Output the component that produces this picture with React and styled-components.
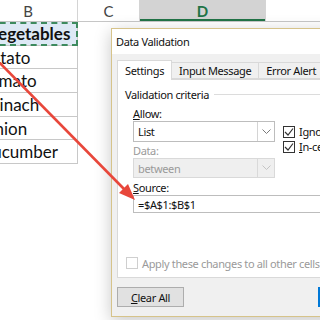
import { styled, createGlobalStyle } from "styled-components";

const GlobalStyle = createGlobalStyle`
    html, body {
        margin: 0;
        padding: 0;
        background: #fff;
        overflow: hidden;
    }
`;

const cellFont = `"Lato", "Liberation Sans", sans-serif`;
const uiFont = `"Noto Sans", "Liberation Sans", sans-serif`;

const vegetables = ["Potato", "Tomato", "Spinach", "Onion", "Cucumber"];

function Check({ checked, disabled }) {
    return (
        <Box $disabled={disabled}>
            {checked && (
                <svg width="10" height="10" viewBox="0 0 10 10">
                    <path d="M1 5 L4 8 L9 1.5" fill="none" stroke="#333" strokeWidth="1.2" />
                </svg>
            )}
        </Box>
    );
}

function Chevron({ disabled }) {
    return (
        <svg width="9" height="6" viewBox="0 0 9 6">
            <path d="M0.5 0.5 L4.5 4.5 L8.5 0.5" fill="none" stroke={disabled ? "#c4c4c4" : "#7a7a7a"} strokeWidth="1" />
        </svg>
    );
}

function App() {
    return (
        <Stage>
            <GlobalStyle />
            <Sheet>
                <HeaderRow>
                    <ColHead>B</ColHead>
                    <ColHead>C</ColHead>
                    <ColHead $active>D</ColHead>
                    <ColHead />
                </HeaderRow>
                <Row>
                    <Cell $title>Vegetables</Cell>
                </Row>
                {vegetables.map((v) => (
                    <Row key={v}>
                        <Cell>{v}</Cell>
                    </Row>
                ))}
            </Sheet>

            <Dialog>
                <TitleBar>Data Validation</TitleBar>
                <Body>
                    <Tabs>
                        <Tab $active>Settings</Tab>
                        <Tab>Input Message</Tab>
                        <Tab>Error Alert</Tab>
                    </Tabs>
                    <Panel>
                        <Legend>
                            <span>Validation criteria</span>
                        </Legend>
                        <Criteria>
                            <Label $top={5} $bottom={1}>
                                <u>A</u>llow:
                            </Label>
                            <FieldRow>
                                <Select>
                                    <span>List</span>
                                    <Arrow>
                                        <Chevron />
                                    </Arrow>
                                </Select>
                                <Options>
                                    <Option>
                                        <Check checked />
                                        Ignore blank
                                    </Option>
                                    <Option>
                                        <Check checked />
                                        <span>
                                            <u>I</u>n-cell dropdown
                                        </span>
                                    </Option>
                                </Options>
                            </FieldRow>
                            <Label $disabled $top={1} $bottom={1}>
                                Data:
                            </Label>
                            <Select $disabled>
                                <span>between</span>
                                <Arrow $disabled>
                                    <Chevron disabled />
                                </Arrow>
                            </Select>
                            <Label $top={2} $bottom={1}>
                                <u>S</u>ource:
                            </Label>
                            <Input>=$A$1:$B$1</Input>
                        </Criteria>
                        <ApplyRow>
                            <Check disabled />
                            Apply these changes to all other cells with the same settings
                        </ApplyRow>
                    </Panel>
                    <Footer>
                        <Button>
                            <u>C</u>lear All
                        </Button>
                        <Button $primary>OK</Button>
                    </Footer>
                </Body>
            </Dialog>

            <ArrowOverlay width="320" height="320" viewBox="0 0 320 320">
                <line x1="-4" y1="59" x2="126" y2="191" stroke="#e8473b" strokeWidth="2.6" />
                <polygon points="135,200 119,193 128,184" fill="#e8473b" />
            </ArrowOverlay>
        </Stage>
    );
}

const Stage = styled.div`
    position: relative;
    width: 320px;
    height: 320px;
    overflow: hidden;
    background: #fff;
`;

const Sheet = styled.div`
    margin-left: -21px;
    width: 380px;
    display: flex;
    flex-direction: column;
`;

const HeaderRow = styled.div`
    display: grid;
    grid-template-columns: 99px 62px 126px 1fr;
    height: 21px;
    border-bottom: 1px solid #c6c6c6;
    background: #fff;
`;

const ColHead = styled.div`
    display: flex;
    align-items: center;
    justify-content: center;
    border-right: 1px solid #d4d4d4;
    font-family: ${cellFont};
    font-size: 15px;
    color: ${(p) => (p.$active ? "#217346" : "#444")};
    font-weight: ${(p) => (p.$active ? 700 : 400)};
    background: ${(p) => (p.$active ? "#d3d3d3" : "#fff")};
    box-shadow: ${(p) => (p.$active ? "inset 0 -2px 0 #217346" : "none")};
`;

const Row = styled.div`
    display: grid;
    grid-template-columns: 99px 1fr;
    height: 23.7px;
`;

const Cell = styled.div`
    display: flex;
    align-items: center;
    justify-content: ${(p) => (p.$title ? "center" : "flex-start")};
    padding-left: 2px;
    box-sizing: border-box;
    font-family: ${cellFont};
    font-size: 17px;
    color: #111;
    white-space: nowrap;
    font-weight: ${(p) => (p.$title ? 700 : 400)};
    background: ${(p) => (p.$title ? "#dde9f5" : "#fff")};
    border-right: 1px solid #c8c8c8;
    border-bottom: 1px solid #c8c8c8;
    outline: ${(p) => (p.$title ? "2px dashed #3d8a5e" : "none")};
    outline-offset: -2px;
`;

const Dialog = styled.div`
    position: absolute;
    left: 111px;
    top: 28px;
    width: 300px;
    height: 287px;
    border: 1px solid #d6c38a;
    background: #f0f0f0;
    box-shadow: 0 4px 16px rgba(0, 0, 0, 0.22);
    display: flex;
    flex-direction: column;
    font-family: ${uiFont};
    font-size: 11px;
    letter-spacing: -0.35px;
    color: #111;
`;

const TitleBar = styled.div`
    height: 25px;
    background: #fff;
    display: flex;
    align-items: center;
    padding-left: 4px;
    font-size: 11px;
`;

const Body = styled.div`
    flex: 1;
    padding: 6px 0 0 5px;
    display: flex;
    flex-direction: column;
`;

const Tabs = styled.div`
    display: flex;
    align-items: flex-end;
    height: 19px;
    position: relative;
    z-index: 1;
`;

const Tab = styled.div`
    height: ${(p) => (p.$active ? "20px" : "17px")};
    margin-bottom: ${(p) => (p.$active ? "-1px" : "0")};
    padding: 0 7px;
    display: flex;
    align-items: center;
    border: 1px solid #d9d9d9;
    border-bottom: ${(p) => (p.$active ? "none" : "1px solid #d9d9d9")};
    margin-left: ${(p) => (p.$active ? "0" : "-1px")};
    background: ${(p) => (p.$active ? "#fff" : "#f0f0f0")};
    box-sizing: border-box;
    white-space: nowrap;
`;

const Panel = styled.div`
    height: 199px;
    flex: none;
    box-sizing: border-box;
    background: #fff;
    border: 1px solid #d9d9d9;
    padding: 7px 0 0 7px;
    display: flex;
    flex-direction: column;

    & > * {
        flex: none;
    }
`;

const Legend = styled.div`
    display: flex;
    align-items: center;
    gap: 5px;
    height: 14px;
    white-space: nowrap;

    &::after {
        content: "";
        flex: 1;
        border-top: 1px solid #dcdcdc;
    }
`;

const Criteria = styled.div`
    padding-left: 8px;
    display: flex;
    flex-direction: column;

    & > * {
        flex: none;
    }
`;

const Label = styled.div`
    height: 14px;
    display: flex;
    align-items: center;
    margin-top: ${(p) => p.$top}px;
    margin-bottom: ${(p) => p.$bottom}px;
    color: ${(p) => (p.$disabled ? "#9a9a9a" : "#111")};
`;

const FieldRow = styled.div`
    display: flex;
    align-items: flex-start;
    gap: 8px;
    height: 21px;
`;

const Select = styled.div`
    flex: none;
    width: 142px;
    height: ${(p) => (p.$disabled ? "20px" : "21px")};
    box-sizing: border-box;
    border: 1px solid ${(p) => (p.$disabled ? "#d9d9d9" : "#bdbdbd")};
    background: ${(p) => (p.$disabled ? "#efefef" : "#fff")};
    color: ${(p) => (p.$disabled ? "#9a9a9a" : "#111")};
    display: flex;
    align-items: center;
    padding-left: 4px;

    span {
        flex: 1;
    }
`;

const Arrow = styled.div`
    width: 16px;
    height: 100%;
    border-left: 1px solid ${(p) => (p.$disabled ? "#d9d9d9" : "#d4d4d4")};
    display: flex;
    align-items: center;
    justify-content: center;
`;

const Options = styled.div`
    display: flex;
    flex-direction: column;
    gap: 0;
    padding-top: 3px;
`;

const Option = styled.div`
    display: flex;
    align-items: center;
    gap: 4px;
    height: 15px;
    white-space: nowrap;
`;

const Box = styled.div`
    width: 12px;
    height: 12px;
    box-sizing: border-box;
    border: 1px solid ${(p) => (p.$disabled ? "#cfcfcf" : "#333")};
    background: #fff;
    display: flex;
    align-items: center;
    justify-content: center;
    flex: none;
`;

const Input = styled.div`
    width: 220px;
    height: 18px;
    box-sizing: border-box;
    border: 1px solid #bdbdbd;
    display: flex;
    align-items: center;
    padding-left: 4px;
`;

const ApplyRow = styled.div`
    height: 14px;
    margin-top: 43px;
    margin-left: 1px;
    display: flex;
    align-items: center;
    gap: 4px;
    color: #9a9a9a;
    white-space: nowrap;
`;

const Footer = styled.div`
    display: flex;
    gap: 134px;
    margin-top: 9px;
`;

const Button = styled.div`
    flex: none;
    width: 67px;
    height: 20px;
    box-sizing: border-box;
    border: ${(p) => (p.$primary ? "2px solid #0078d7" : "1px solid #adadad")};
    background: #e1e1e1;
    display: flex;
    align-items: center;
    justify-content: center;
`;

const ArrowOverlay = styled.svg`
    position: absolute;
    left: 0;
    top: 0;
    pointer-events: none;
`;

export default App;
